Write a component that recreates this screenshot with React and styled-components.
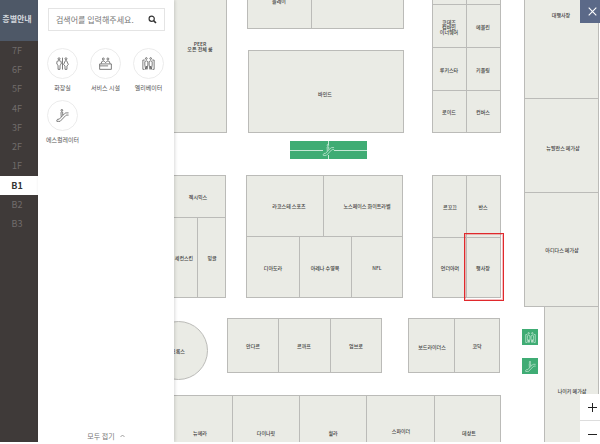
import React, { useState } from 'react'
import styled, { createGlobalStyle, css } from 'styled-components'

const colors = {
  side: '#3f3a39',
  sideHead: '#4e5867',
  shop: '#eaebe5',
  line: '#bbbbb8',
  green: '#3fac74',
  close: '#5b6988',
  red: '#e0282c',
};

const floors = ['7F', '6F', '5F', '4F', '3F', '2F', '1F', 'B1', 'B2', 'B3'];

const facilities = [
  { name: '화장실', Icon: RestroomIcon },
  { name: '서비스 시설', Icon: ServiceIcon },
  { name: '엘리베이터', Icon: ElevatorIcon },
  { name: '에스컬레이터', Icon: EscalatorIcon },
];

// outlines of the shops on the floor: left, top, right, bottom
const shops = [
  [-1, -40, 52, 132],
  [73, -29, 137, 28],
  [137, -29, 229, 28],
  [74, 50, 229, 132],
  [258, -40, 292, 4],
  [292, -40, 326, 4],
  [258, 4, 292, 47],
  [292, 4, 326, 47],
  [258, 47, 292, 90],
  [292, 47, 326, 90],
  [258, 90, 292, 132],
  [292, 90, 326, 132],
  [350, -40, 424, 98],
  [350, 98, 424, 192],
  [350, 192, 424, 306],
  [370, 306, 424, 460],
  [-1, 175, 51, 217],
  [-1, 217, 23, 297],
  [23, 217, 51, 297],
  [72, 175, 149, 236],
  [149, 175, 228, 236],
  [72, 236, 125, 297],
  [125, 236, 177, 297],
  [177, 236, 228, 297],
  [258, 175, 292, 237],
  [292, 175, 326, 237],
  [258, 237, 292, 297],
  [292, 237, 326, 297],
  [53, 318, 104, 372],
  [104, 318, 156, 372],
  [156, 318, 207, 372],
  [234, 318, 280, 372],
  [280, 318, 325, 372],
  [-1, 395, 58, 460],
  [58, 395, 125, 460],
  [125, 395, 192, 460],
  [192, 395, 260, 460],
  [260, 395, 326, 460],
];

// shop names, placed by their centre
const labels = [
  [26, 46, 'PEER\n오픈 전체 룸'],
  [105, 0, '플레이'],
  [151, 93, '바인드'],
  [275, 26, '코데즈\n컴바인\n이너웨어'],
  [309, 26, '에블린'],
  [275, 69, '루키스타'],
  [309, 69, '키플링'],
  [275, 111, '로이드'],
  [309, 111, '컨버스'],
  [387, 14, '대행사장'],
  [389, 147, '뉴발란스 메가샵'],
  [388, 249, '아디다스 메가샵'],
  [398, 390, '나이키 메가샵'],
  [24, 196, '젝시믹스'],
  [10, 257, '세컨스킨'],
  [38, 257, '밍글'],
  [115, 205, '라코스테 스포츠'],
  [193, 205, '노스페이스 화이트라벨'],
  [99, 267, '디아도라'],
  [151, 267, '아레나 수영복'],
  [203, 267, 'NFL'],
  [276, 206, '르꼬끄'],
  [309, 206, '반스'],
  [276, 267, '언더아머'],
  [309, 267, '행사장'],
  [4, 350, '크록스'],
  [79, 345, '안다르'],
  [130, 345, '르까프'],
  [182, 345, '엄브로'],
  [258, 346, '보드라이더스'],
  [303, 345, '코닥'],
  [26, 432, '뉴에라'],
  [92, 432, '다이나핏'],
  [159, 432, '휠라'],
  [227, 430, '스파이더'],
  [295, 432, '데상트'],
];

export default function App() {
  const [floor, setFloor] = useState('B1');

  return (
    <>
      <GlobalStyle />
      <Page>

        <FloorNav aria-label="층별안내">
          <FloorTitle>층별안내</FloorTitle>
          <FloorList>
            {floors.map(name => (
              <FloorButton
                key={name}
                type="button"
                $active={name === floor}
                onClick={() => setFloor(name)}
              >
                {name}
              </FloorButton>
            ))}
          </FloorList>
        </FloorNav>

        <SearchPane>
          <SearchForm onSubmit={e => e.preventDefault()}>
            <SearchInput type="text" aria-label="검색어" placeholder="검색어를 입력해주세요." />
            <SearchButton type="submit" aria-label="검색">
              <svg width="9" height="9" viewBox="0 0 9 9" fill="none" stroke="#333">
                <circle cx="3.7" cy="3.7" r="2.6" strokeWidth="1.2" />
                <path d="M5.6 5.6L8 8" strokeWidth="1.6" />
              </svg>
            </SearchButton>
          </SearchForm>

          <FacilityGrid>
            {facilities.map(({ name, Icon }) => (
              <FacilityButton key={name} type="button">
                <FacilityCircle><Icon size={13} /></FacilityCircle>
                {name}
              </FacilityButton>
            ))}
          </FacilityGrid>

          <FoldButton type="button">
            모두 접기
            <svg width="5" height="4" viewBox="0 0 5 4" fill="none" stroke="#888" strokeWidth="0.8">
              <path d="M0.5 3L2.5 1L4.5 3" />
            </svg>
          </FoldButton>
        </SearchPane>

        <FloorMap>
          {shops.map(([left, top, right, bottom]) => (
            <Shop key={`${left},${top}`} $left={left} $top={top} $right={right} $bottom={bottom} />
          ))}
          <Shop $left={-25} $top={321} $right={33} $bottom={379} $round />

          {labels.map(([x, y, name]) => (
            <ShopLabel key={name} $x={x} $y={y}>{name}</ShopLabel>
          ))}

          <Selection />

          <EscalatorHall>
            <svg width="77" height="18" viewBox="0 0 77 18" fill="none" stroke="#c4e8d4">
              <path d="M0 9.5H33M44 9.5H77M38.5 0V4M38.5 14V18" />
              <g transform="translate(32.5 3)" strokeWidth="0.8">
                <EscalatorPaths />
              </g>
            </svg>
          </EscalatorHall>
          <Pin $x={348} $y={329}><ElevatorIcon size={11} /></Pin>
          <Pin $x={348} $y={358}><EscalatorIcon size={11} /></Pin>

          <CloseButton type="button" aria-label="닫기">
            <svg width="9" height="9" viewBox="0 0 9 9" stroke="#fff" strokeWidth="1.1">
              <path d="M0.7 0.7L8.3 8.3M8.3 0.7L0.7 8.3" />
            </svg>
          </CloseButton>

          <ZoomControls>
            <ZoomButton type="button" aria-label="확대">
              <svg width="9" height="9" viewBox="0 0 9 9" stroke="#222">
                <path d="M0 4.5H9M4.5 0V9" />
              </svg>
            </ZoomButton>
            <ZoomButton type="button" aria-label="축소">
              <svg width="9" height="9" viewBox="0 0 9 9" stroke="#222">
                <path d="M0 4.5H9" />
              </svg>
            </ZoomButton>
          </ZoomControls>
        </FloorMap>

      </Page>
    </>
  )
}

function Glyph({ size, children }) {
  return (
    <svg width={size} height={size} viewBox="0 0 12 12" fill="none" stroke="currentColor" strokeWidth="0.7">
      {children}
    </svg>
  )
}

function RestroomIcon({ size }) {
  return (
    <Glyph size={size}>
      <circle cx="2.8" cy="1.6" r="0.9" />
      <path d="M1.9 11.4V7.6L0.8 6.6V4.6Q0.8 3.4 2.8 3.4T4.8 4.6V6.6L3.7 7.6V11.4Z" />
      <path d="M6 0.6V11.6" />
      <circle cx="9.2" cy="1.6" r="0.9" />
      <path d="M8.6 3.4H9.8L11.4 7L10.1 8.2V11.4H8.3V8.2L7 7Z" />
    </Glyph>
  )
}

function ServiceIcon({ size }) {
  return (
    <Glyph size={size}>
      <circle cx="4" cy="1.8" r="0.9" />
      <circle cx="8.2" cy="1.8" r="0.9" />
      <path d="M2 6.2L2.6 4.2Q4 3 5.2 4.2L6.1 5.2L7 4.2Q8.2 3 9.6 4.2L10.2 6.2" />
      <path d="M0.6 11.4V6.4H11.4V11.4H0.6M0.6 8.2H8.4" />
    </Glyph>
  )
}

function ElevatorIcon({ size }) {
  return (
    <Glyph size={size}>
      <path d="M2.6 2.8H0.8V11.4H2.4M9.4 2.8H11.2V11.4H9.6" />
      <circle cx="4" cy="1.4" r="0.8" />
      <circle cx="8" cy="1.4" r="0.8" />
      <path d="M2.6 7.4V4.2Q4 2.8 5.4 4.2V7.4L4.6 11.4L4 8.4L3.4 11.4Z" />
      <path d="M6.6 7.4V4.2Q8 2.8 9.4 4.2V7.4L8.6 11.4L8 8.4L7.4 11.4Z" />
    </Glyph>
  )
}

function EscalatorPaths() {
  return (
    <>
      <path d="M2.6 11.4H0.8Q0.4 10 1.6 9.4H3L8 4.2Q8.6 3.6 9.4 3.6H11.6M2.6 11.4H3.8L9 6Q9.4 5.6 10.2 5.6H11.6" />
      <circle cx="5.4" cy="1.2" r="0.8" />
      <path d="M4.8 7.2L4.6 3Q5.4 2.2 6.2 3V5.6" />
    </>
  )
}

function EscalatorIcon({ size }) {
  return <Glyph size={size}><EscalatorPaths /></Glyph>
}

const GlobalStyle = createGlobalStyle`
  * {
    box-sizing: border-box;
  }

  body {
    margin: 0;
    background: #fff;
    font-family: "Noto Sans CJK KR", "Noto Sans", sans-serif;
  }

  button, input {
    margin: 0;
    padding: 0;
    border: 0;
    background: none;
    font-family: inherit;
  }

  svg {
    display: block;
  }
`;

const Page = styled.div`
  display: flex;
  height: calc(100vh - 2px);
  overflow: hidden;
`;

const FloorNav = styled.nav`
  flex: 0 0 38px;
  background: ${colors.side};
`;

const FloorTitle = styled.h1`
  display: flex;
  align-items: center;
  justify-content: center;
  height: 41px;
  margin: 0;
  padding: 0 4px 4px 0;
  background: ${colors.sideHead};
  color: #d3d7dd;
  font-size: 8px;
  line-height: 10px;
  white-space: nowrap;
`;

const FloorList = styled.div`
  display: grid;
  grid-template-rows: repeat(10, 1fr);
  height: 193px;
`;

const FloorButton = styled.button`
  padding-right: 4px;
  color: #716c6b;
  font-size: 9px;
  line-height: 12px;

  ${({ $active }) => $active && css`
    background: #fff;
    color: #333;
    font-weight: 700;
  `}
`;

const SearchPane = styled.section`
  position: relative;
  z-index: 1;
  flex: 0 0 136px;
  display: flex;
  flex-direction: column;
  padding-top: 8px;
  background: #fff;
  box-shadow: 1px 0 3px rgba(0, 0, 0, 0.15);
`;

const SearchForm = styled.form`
  display: flex;
  align-items: center;
  height: 23px;
  margin: 0 9px 0 10px;
  padding: 0 7px;
  border: 1px solid #e4e4e4;
`;

const SearchInput = styled.input`
  flex: 1;
  min-width: 0;
  color: #444;
  font-size: 8px;
  line-height: 12px;
  outline: none;

  &::placeholder {
    color: #777;
    opacity: 1;
  }
`;

const SearchButton = styled.button`
  flex: none;
`;

const FacilityGrid = styled.div`
  display: grid;
  grid-template-columns: repeat(3, 1fr);
  grid-auto-rows: 52px;
  margin: 17px 4px 0 3px;
`;

const FacilityButton = styled.button`
  display: flex;
  flex-direction: column;
  align-items: center;
  gap: 4px;
  color: #555;
  font-size: 6px;
  line-height: 10px;
  white-space: nowrap;
`;

const FacilityCircle = styled.span`
  display: flex;
  align-items: center;
  justify-content: center;
  width: 31px;
  height: 31px;
  border: 1px solid #ececec;
  border-radius: 50%;
  color: #555;
`;

const FoldButton = styled.button`
  display: flex;
  align-items: center;
  justify-content: center;
  gap: 5px;
  margin-top: auto;
  color: #777;
  font-size: 7px;
  line-height: 12px;
`;

const FloorMap = styled.main`
  position: relative;
  flex: 1;
  overflow: hidden;
  background: #fff;
`;

const Shop = styled.div`
  position: absolute;
  left: ${({ $left }) => $left}px;
  top: ${({ $top }) => $top}px;
  width: ${({ $left, $right }) => $right - $left + 1}px;
  height: ${({ $top, $bottom }) => $bottom - $top + 1}px;
  border: 1px solid ${colors.line};
  border-radius: ${({ $round }) => $round ? '50%' : 0};
  background: ${colors.shop};
`;

const ShopLabel = styled.span`
  position: absolute;
  left: ${({ $x }) => $x}px;
  top: ${({ $y }) => $y}px;
  transform: translate(-50%, -50%);
  color: #444;
  font-size: 5px;
  font-weight: 500;
  line-height: 5px;
  text-align: center;
  white-space: pre;
`;

const Selection = styled.div`
  position: absolute;
  left: 290px;
  top: 233px;
  width: 40px;
  height: 68px;
  border: 1px solid ${colors.red};
  box-shadow: inset 0 0 0 1px rgba(224, 40, 44, 0.3);
`;

const EscalatorHall = styled.div`
  position: absolute;
  left: 116px;
  top: 141px;
  background: ${colors.green};
`;

const Pin = styled.div`
  position: absolute;
  left: ${({ $x }) => $x}px;
  top: ${({ $y }) => $y}px;
  display: flex;
  align-items: center;
  justify-content: center;
  width: 16px;
  height: 16px;
  background: ${colors.green};
  color: #d4efe0;
`;

const CloseButton = styled.button`
  position: absolute;
  top: 0;
  right: 0;
  display: flex;
  align-items: center;
  justify-content: center;
  width: 20px;
  height: 23px;
  padding-left: 4px;
  background: ${colors.close};
`;

const ZoomControls = styled.div`
  position: absolute;
  right: 0;
  bottom: -5px;
  display: flex;
  flex-direction: column;
  gap: 1px;
  background: #ddd;
`;

const ZoomButton = styled.button`
  display: flex;
  align-items: center;
  justify-content: center;
  width: 20px;
  height: 26px;
  padding-left: 4px;
  background: #fff;
`;
